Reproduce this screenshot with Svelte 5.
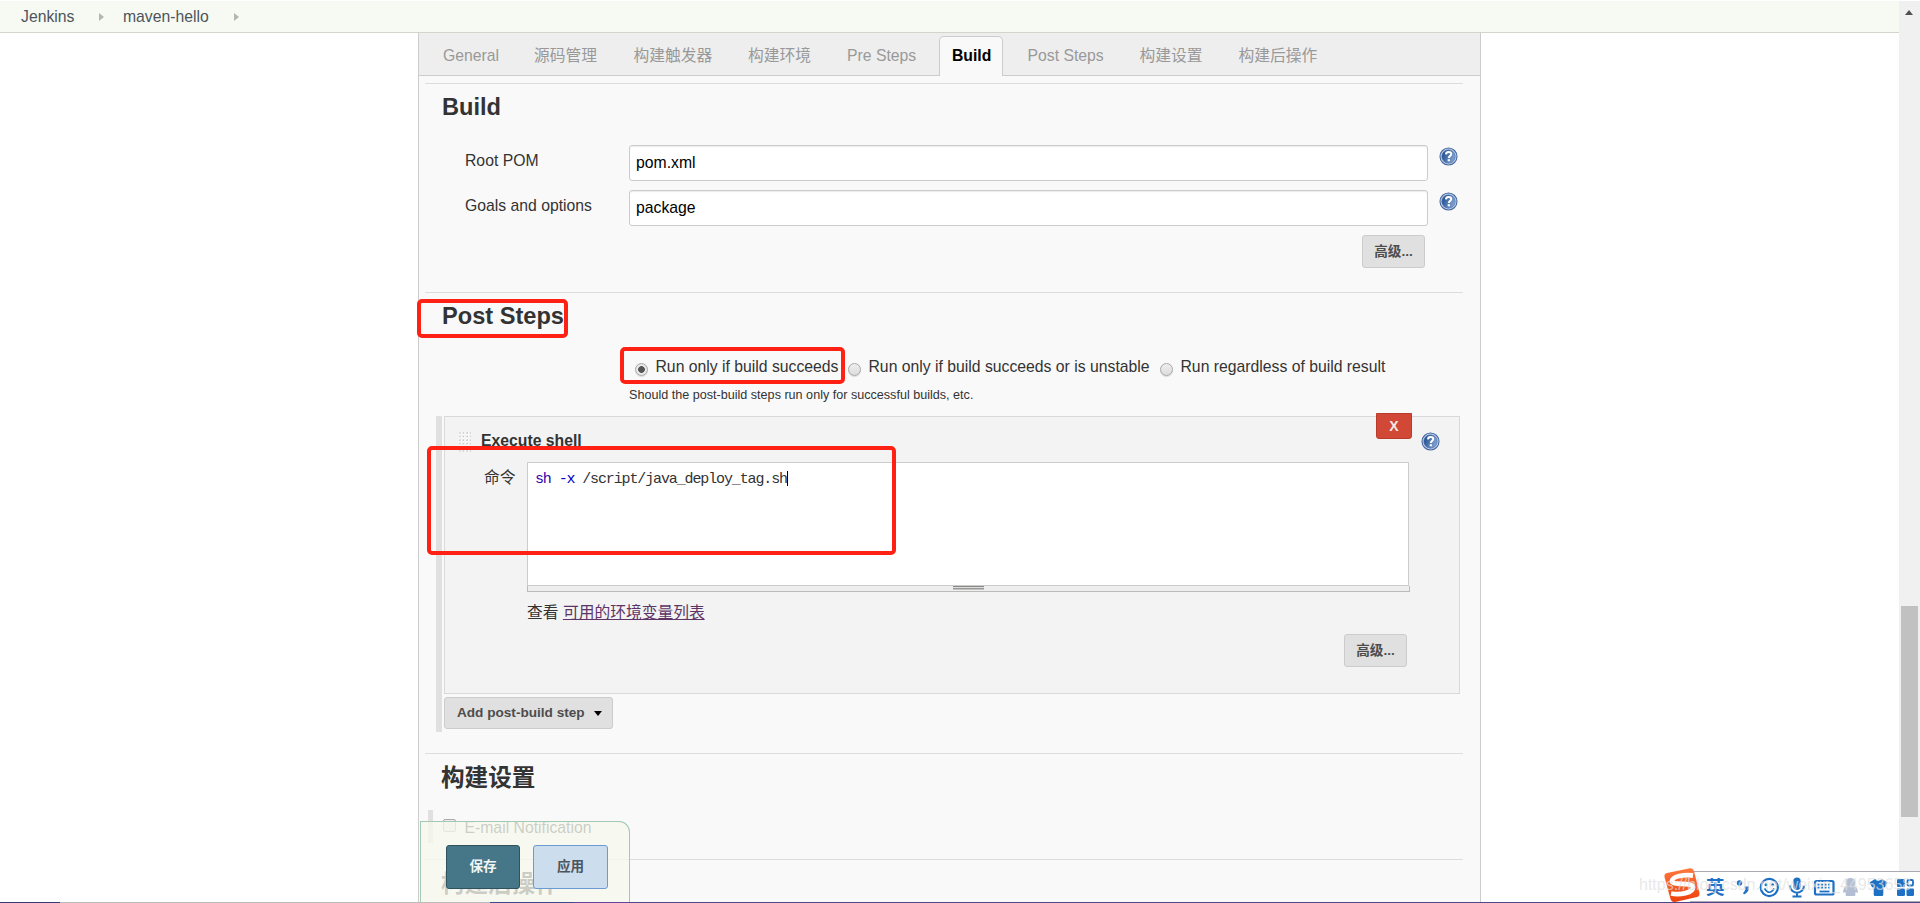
<script>
  const tabs = [
    { label: 'General', width: 91 },
    { label: '源码管理', width: 99.5 },
    { label: '构建触发器', width: 114.5 },
    { label: '构建环境', width: 99 },
    { label: 'Pre Steps', width: 93 },
    { label: 'Build', width: 87.5, active: true },
    { label: 'Post Steps', width: 112 },
    { label: '构建设置', width: 99 },
    { label: '构建后操作', width: 120 }
  ];
  const fields = [
    { label: 'Root POM', value: 'pom.xml' },
    { label: 'Goals and options', value: 'package' }
  ];
  const runModes = [
    'Run only if build succeeds',
    'Run only if build succeeds or is unstable',
    'Run regardless of build result'
  ];
</script>

{#snippet help()}
  <svg class="help" width="19" height="19" viewBox="0 0 19 19">
    <defs>
      <linearGradient id="helpfill" x1="0" y1="0" x2="1" y2="0.4">
        <stop offset="0.1" stop-color="#1f4d8f" />
        <stop offset="1" stop-color="#7d9fcd" />
      </linearGradient>
    </defs>
    <circle cx="9.5" cy="9.5" r="8.5" fill="#c3d3ea" stroke="#47699f" stroke-width="1.1" />
    <circle cx="9.5" cy="9.5" r="6.7" fill="url(#helpfill)" stroke="#4a70ab" stroke-width="0.6" />
    <path d="M6.9 7.4C7 5.6 8.2 4.9 9.6 4.9C11.2 4.9 12.3 5.8 12.3 7.1C12.3 8.9 9.8 8.9 9.8 11" fill="none" stroke="#fff" stroke-width="2" />
    <rect x="8.7" y="12.2" width="2.2" height="2.1" fill="#fff" />
  </svg>
{/snippet}

<div class="page">
  <header class="crumbs">
    <span>Jenkins</span><i class="arrow"></i><span>maven-hello</span><i class="arrow"></i>
  </header>

  <main class="panel">
    <nav class="tabs">
      {#each tabs as tab}
        <div class="slot" style="width: {tab.width}px"><span class="tab" class:active={tab.active}>{tab.label}</span></div>
      {/each}
    </nav>

    <section class="build">
      <h2>Build</h2>
      <div class="fields">
        {#each fields as field}
          <div class="field">
            <span class="label">{field.label}</span>
            <div class="input">{field.value}</div>
            {@render help()}
          </div>
        {/each}
      </div>
      <div class="actions"><button class="btn small">高级...</button></div>
    </section>

    <section class="post">
      <h2>Post Steps</h2>
      <div class="modes">
        {#each runModes as mode, i}
          <div class="mode"><i class="radio" class:checked={i === 0}></i><span>{mode}</span></div>
        {/each}
      </div>
      <p class="hint">Should the post-build steps run only for successful builds, etc.</p>
      <div class="repeat">
        <div class="steps">
          <div class="step">
            <div class="step-head">
              <i class="grip"></i>
              <b>Execute shell</b>
              <button class="delete">X</button>
              {@render help()}
            </div>
            <div class="command">
              <span class="cmd-label">命令</span>
              <div class="editor">
                <div class="code"><span class="kw">sh</span> <span class="opt">-x</span> /script/java_deploy_tag.sh<i class="caret"></i></div>
                <div class="resize"><i></i></div>
              </div>
            </div>
            <div class="env">查看 <a href="#env">可用的环境变量列表</a></div>
            <div class="step-actions"><button class="btn small">高级...</button></div>
          </div>
          <button class="btn add">Add post-build step<i class="down"></i></button>
        </div>
      </div>
    </section>

    <section class="settings">
      <h2 class="cjk">构建设置</h2>
      <div class="mail"><i class="checkbox"></i><span>E-mail Notification</span></div>
    </section>

    <section class="after">
      <h2 class="cjk">构建后操作</h2>
    </section>
  </main>

  <div class="sticky">
    <button class="save">保存</button>
    <button class="apply">应用</button>
  </div>

  <i class="mark m1"></i>
  <i class="mark m2"></i>
  <i class="mark m3"></i>

  <div class="scroll"><i class="up"></i><i class="thumb"></i></div>
  <div class="taskline"></div>

  <div class="ime">
    <svg width="260" height="36" viewBox="1660 867 260 36">
      <rect x="1690" y="871" width="230" height="31" fill="#fff" />
      <path d="M1690 871.5H1920M1690 901.5H1920" stroke="#aaaab4" />
      <defs>
        <linearGradient id="sogou" x1="0" y1="0" x2="0" y2="1">
          <stop offset="0" stop-color="#ff7a3d" />
          <stop offset="1" stop-color="#ee3f0c" />
        </linearGradient>
      </defs>
      <path d="M1667 873L1690 868.2Q1693 867.8 1694 871L1699.5 893Q1700 896 1697 897L1675 902Q1671.500 902.500 1670.500 899L1664.500 877Q1664 873.700 1667 873Z" fill="url(#sogou)" />
      <path d="M1693 875.500C1684 874.500 1672.500 876 1672 881C1671.500 886 1693 881.500 1693 887.500C1693 893 1680 895 1671 893.500" fill="none" stroke="#fff" stroke-width="4.800" />
      <text x="1706" y="894.300" class="ying">英</text>
      <g fill="#1d70c4">
        <circle cx="1739.500" cy="883" r="2.700" />
        <path d="M1744.500 886.500H1749Q1749.500 892 1744 894.500L1743 893Q1746 891 1744.500 886.500Z" />
        <circle cx="1769.300" cy="887.500" r="8.600" fill="none" stroke="#1d70c4" stroke-width="2.200" />
        <circle cx="1766" cy="884.700" r="1.500" />
        <circle cx="1772.600" cy="884.700" r="1.500" />
        <path d="M1764.500 888.500Q1769.300 896 1774.200 888.500" fill="none" stroke="#1d70c4" stroke-width="1.700" />
        <rect x="1793.300" y="877.500" width="7.400" height="12.500" rx="3.700" />
        <path d="M1790 885.500C1790 895 1804 895 1804 885.500M1797 892.500V896.500M1792.500 896.500H1801.500" fill="none" stroke="#1d70c4" stroke-width="2" />
        <rect x="1815" y="881" width="18.500" height="13.500" rx="1.500" fill="#fff" stroke="#1d70c4" stroke-width="2.200" />
        <path d="M1817.500 884.700H1831.500M1817.500 887.700H1831.500" fill="none" stroke="#1d70c4" stroke-width="1.800" stroke-dasharray="2 1.500" />
        <path d="M1819.500 891.500H1829.500" stroke="#1d70c4" stroke-width="1.800" />
        <path d="M1869.500 882.500L1875 879Q1878.500 882.500 1882 879L1887.500 882.500L1884.800 887.500L1883.300 886.800V894.500Q1883.300 896 1881.800 896H1875.200Q1873.700 896 1873.700 894.500V886.800L1872.200 887.500Z" />
        <rect x="1897" y="879" width="8" height="8" rx="1.200" />
        <rect x="1897" y="888.500" width="8" height="7.500" rx="1.200" />
        <rect x="1906.500" y="888.500" width="7.500" height="7.500" rx="1.200" />
        <rect x="1907.500" y="880" width="5.500" height="5.500" rx="1" fill="#fff" stroke="#1d70c4" stroke-width="1.800" />
      </g>
      <g fill="#b3bed2">
        <circle cx="1850.500" cy="882.800" r="4.900" />
        <path d="M1846 886Q1842.500 889 1843.300 893L1845.500 892L1845.800 896H1855.200L1855.500 892L1857.700 893Q1858.500 889 1855 886Z" />
      </g>
    </svg>
  </div>
  <span class="watermark">https://blog.csdn.net/weixin_44953658</span>
</div>

<style>
  :global(body) { margin: 0; background: #fff; overflow: hidden; }
  * { box-sizing: border-box; }
  .page {
    position: relative;
    width: 1920px;
    height: 903px;
    overflow: hidden;
    background: #fff;
    color: #333;
    font: 15.75px/20px "Liberation Sans", "Noto Sans CJK SC", sans-serif;
  }
  button { font-family: inherit; padding: 0; margin: 0; cursor: pointer; }
  .crumbs {
    display: flex;
    height: 32px;
    margin-top: 1px;
    padding: 6px 0 0 21px;
    background: #f6faf2;
    border-bottom: 1px solid #d3d4cb;
    color: #4d545d;
  }
  .arrow {
    width: 0;
    height: 0;
    margin: 6px 18.500px 0 25px;
    border: 4.500px solid transparent;
    border-left: 5px solid #b4b6b2;
    border-right: 0;
  }
  .panel {
    width: 1063px;
    height: 870px;
    margin-left: 418px;
    background: #f9f9f9;
    border: solid #ccc;
    border-width: 0 1px;
    overflow: hidden;
  }
  .tabs {
    display: flex;
    height: 43px;
    padding-left: 24px;
    background: #eee;
    border-bottom: 1px solid #ccc;
    color: #999;
    white-space: nowrap;
  }
  .slot { flex: none; padding-top: 13px; }
  .tab { display: block; }
  .tab.active {
    width: 64px;
    height: 40px;
    margin: -10px 0 0 -1px;
    padding: 9px 0 0 12px;
    background: #f9f9f9;
    border: 1px solid #ccc;
    border-bottom: 0;
    border-radius: 5px 5px 0 0;
    color: #000;
    font-weight: bold;
  }
  section { width: 1038px; margin-left: 6px; border-top: 1px solid #ddd; }
  h2 { height: 38px; margin: 0; padding: 8px 0 0 17px; font-size: 23.6px; line-height: 30px; }
  .cjk { padding: 9px 0 0 16px; }
  .build { height: 209px; margin-top: 7px; }
  .fields { display: grid; gap: 9px; margin-top: 23px; }
  .field { display: grid; grid-template-columns: 164px 799px 29px; height: 36px; padding-left: 40px; }
  .label { padding-top: 6px; }
  .input {
    height: 36px;
    padding-left: 6px;
    background: #fff;
    border: 1px solid #ccc;
    border-radius: 3px;
    box-shadow: inset 0 1px 1px rgba(0, 0, 0, .08);
    color: #000;
    line-height: 33px;
  }
  .field .help { margin: 2px 0 0 10.500px; }
  .actions { display: flex; justify-content: flex-end; margin-top: 9px; padding-right: 38px; }
  .btn { background: #e0e0e0; border: 1px solid #ccc; border-radius: 3px; color: #4d4d4d; font-size: 13.600px; font-weight: bold; }
  .small { width: 63px; height: 33px; padding-bottom: 4px; }
  .post { height: 461px; }
  .modes { display: grid; grid-template-columns: 213px 312px auto; height: 20px; margin-top: 26px; padding-left: 210px; }
  .mode { display: flex; gap: 7.500px; white-space: nowrap; }
  .radio {
    flex: none;
    width: 13px;
    height: 13px;
    margin-top: 6px;
    border: 1px solid #a8a8a8;
    border-radius: 50%;
    background: linear-gradient(#eee, #ddd);
    box-shadow: 0 1px 1px rgba(0, 0, 0, .12);
  }
  .checked { background: radial-gradient(circle, #555 0 3px, #e8e8e8 3.700px); }
  .hint { height: 20px; margin: 8px 0 0 204px; font-size: 12.600px; }
  .repeat { display: flex; height: 316px; margin: 11px 0 0 11px; border-left: 6px solid #e0e0e0; padding-left: 2px; }
  .steps { width: 1016px; }
  .step { height: 278px; background: #f3f3f3; border: 1px solid #d9d9d9; }
  .step-head { display: flex; height: 45px; }
  .step-head b { width: 895px; margin: 14px 0 0 10px; line-height: 20px; }
  .grip {
    width: 13px;
    height: 21px;
    margin: 14px 0 0 13px;
    background: radial-gradient(circle at 2px 2px, #c7c7c7 0 .7px, #fff 1px 1.500px, transparent 1.700px) 0 0 / 3.600px 3.600px;
  }
  .delete {
    width: 36px;
    height: 26px;
    margin-top: -4px;
    background: #d14836;
    border: 1px solid #b83b2b;
    border-radius: 0 0 3px 3px;
    color: #f5e9e7;
    font-size: 14px;
    font-weight: bold;
  }
  .step-head .help { margin: 15px 0 0 8.500px; }
  .command { display: flex; height: 130px; }
  .cmd-label { width: 82px; padding: 6px 0 0 39px; }
  .editor { width: 883px; }
  .code {
    width: 882px;
    height: 124px;
    padding: 7px 0 0 7px;
    background: #fff;
    border: 1px solid #ccc;
    color: #333;
    font: 15px/20px "Liberation Mono", monospace;
    letter-spacing: -1.127px;
    white-space: pre;
  }
  .kw { color: #30a; }
  .opt { color: #00c; }
  .caret { display: inline-block; width: 1px; height: 15px; margin-left: 0; background: #000; vertical-align: -3px; }
  .resize { height: 6px; background: #eee; border: solid #bbb; border-width: 0 1px 1px; }
  .resize i { display: block; width: 31px; height: 4px; margin: 0 0 0 425px; border-top: 0; background: linear-gradient(#888 1px, #ddd 1px 2px, #999 2px 3px, #c4c4bf 3px); }
  .env { height: 20px; margin: 11px 0 0 82px; }
  .env a { color: #5c3566; }
  .step-actions { display: flex; justify-content: flex-end; margin-top: 11px; padding-right: 52px; }
  .add { display: flex; align-items: center; width: 169px; height: 32px; margin-top: 3px; padding: 0 0 2px 12px; white-space: nowrap; }
  .down { width: 0; height: 0; margin: 3px 0 0 9px; border: 4px solid transparent; border-top: 5px solid #000; border-bottom: 0; }
  .settings { height: 106px; }
  .mail { display: flex; height: 33px; margin: 18px 0 0 3px; border-left: 5px solid #e0e0e0; padding-left: 10px; color: #333; }
  .checkbox { width: 13px; height: 13px; margin-top: 9px; background: #eee; border: 1px solid #aaa; border-radius: 2px; }
  .mail span { margin: 8px 0 0 8.500px; }
  .sticky {
    position: absolute;
    left: 420px;
    top: 821px;
    display: flex;
    gap: 13px;
    width: 210px;
    height: 82px;
    padding: 23px 0 0 25px;
    background: rgba(246, 248, 238, .78);
    border: 1px solid #a3c9b4;
    border-bottom: 0;
    border-radius: 0 11px 0 0;
  }
  .sticky button { height: 44px; padding-bottom: 4px; border-radius: 3px; font-size: 13.600px; font-weight: bold; }
  .save { width: 74px; background: #457788; border: 1px solid #30525e; color: #f2f5f6; }
  .apply { width: 75px; background: #ccdded; border: 1px solid #6a9bd2; color: #4d545d; }
  .mark { position: absolute; border: 4px solid #ff2114; border-radius: 5px; }
  .m1 { left: 416.500px; top: 298.500px; width: 151px; height: 39px; }
  .m2 { left: 619.500px; top: 346.500px; width: 225px; height: 37px; }
  .m3 { left: 426.500px; top: 445.500px; width: 469px; height: 109px; }
  .scroll { position: absolute; left: 1899px; top: 1px; width: 21px; height: 870px; background: #f0f0f0; }
  .up { display: block; width: 0; height: 0; margin: 9px 0 0 6px; border: 4.500px solid transparent; border-bottom: 5px solid #505050; border-top: 0; }
  .thumb { display: block; width: 17px; height: 211px; margin: 591px 0 0 2px; background: #c1c1c1; }
  .taskline {
    position: absolute;
    left: 0;
    top: 902px;
    width: 1920px;
    height: 1px;
    background: linear-gradient(90deg, #3a3a78 0 60px, #bbb 60px 490px, #3b4a88 490px 574px, #62479b 574px 630px, #4e488a 630px);
  }
  .ime { position: absolute; left: 1660px; top: 867px; height: 36px; }
  .ime svg { display: block; }
  .ying { font: bold 18.500px "Noto Sans CJK SC", sans-serif; fill: #1d70c4; }
  .watermark { position: absolute; left: 1639px; top: 875px; color: rgba(224, 224, 224, .72); font-size: 16px; white-space: nowrap; }
</style>
